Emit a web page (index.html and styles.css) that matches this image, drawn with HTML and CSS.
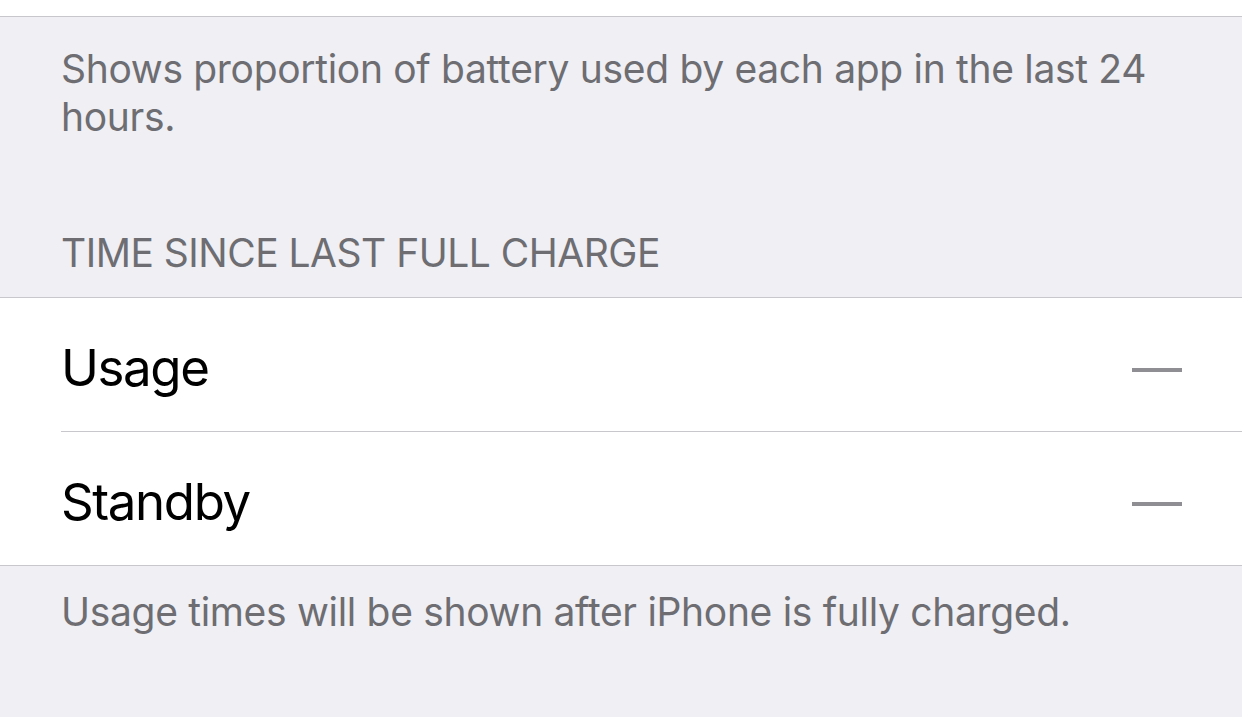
FILE: index.html
```html
<!DOCTYPE html>
<html lang="en">
<head>
    <meta charset="UTF-8">
    <meta name="viewport" content="width=device-width, initial-scale=1.0">
    <title>Battery</title>
    <link rel="stylesheet" href="styles.css">
</head>
<body>
    <div class="top-cell"></div>

    <p class="note first-note">Shows proportion of battery used by each app in the last 24 hours.</p>

    <h3 class="section-header">TIME SINCE LAST FULL CHARGE</h3>

    <div class="group">
        <div class="cell">
            <div class="cell-body">
                <span class="label">Usage</span>
                <span class="value">—</span>
            </div>
        </div>
        <div class="cell">
            <div class="cell-body">
                <span class="label">Standby</span>
                <span class="value">—</span>
            </div>
        </div>
    </div>

    <p class="note">Usage times will be shown after iPhone is fully charged.</p>
</body>
</html>
```

FILE: styles.css
```css
body {
    margin: 0;
    background: #efeff4;
    font-family: Inter, "Noto Sans", sans-serif;
    color: #000;
}
.top-cell {
    height: 16px;
    background: #fff;
    border-bottom: 1px solid #c8c7cc;
}
.note {
    margin: 0;
    padding: 22px 61px 0 61px;
    font-size: 39px;
    line-height: 48px;
    letter-spacing: -0.32px;
    color: #6d6d72;
}
.first-note {
    padding-top: 28px;
}
.section-header {
    margin: 0;
    padding: 88px 61px 20px 61px;
    font-size: 39px;
    line-height: 48px;
    letter-spacing: -0.5px;
    font-weight: normal;
    color: #6d6d72;
}
.group {
    background: #fff;
    border-top: 1px solid #c8c7cc;
    border-bottom: 1px solid #c8c7cc;
}
.cell {
    padding-left: 61px;
}
.cell-body {
    height: 127px;
    padding-top: 6px;
    display: flex;
    align-items: center;
    justify-content: space-between;
    padding-right: 60px;
}
.cell + .cell .cell-body {
    border-top: 1px solid #c8c7cc;
}
.label {
    font-size: 51px;
    letter-spacing: -1.4px;
}
.value {
    font-size: 50px;
    color: #8e8e93;
}
```
